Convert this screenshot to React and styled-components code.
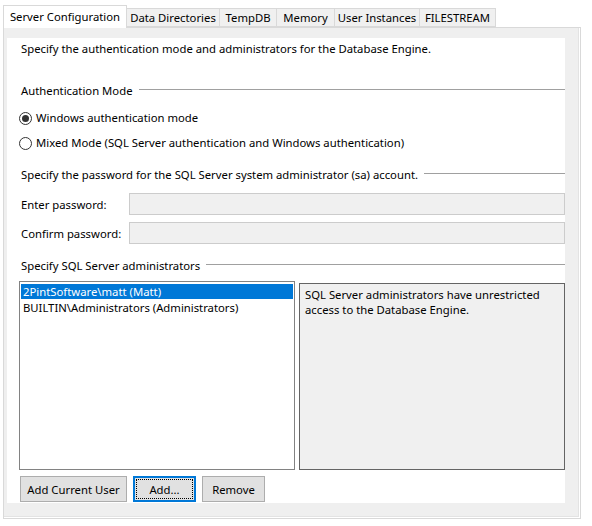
import React from "react";
import styled, { createGlobalStyle } from "styled-components";

const Global = createGlobalStyle`
  html, body {
    margin: 0;
    padding: 0;
    background: #fff;
  }
  body {
    font-family: "Noto Sans", "Open Sans", sans-serif;
    font-size: 11.3px;
    color: #000;
  }
`;

const Window = styled.div`
  width: 592px;
  height: 526px;
  padding: 5px 0 0 3px;
  box-sizing: border-box;
`;

const TabStrip = styled.div`
  display: flex;
  align-items: flex-end;
  height: 22px;
  position: relative;
  z-index: 1;
`;

const Tab = styled.div`
  width: ${(p) => p.$w}px;
  height: ${(p) => (p.$active ? 23 : 19)}px;
  box-sizing: border-box;
  display: flex;
  align-items: center;
  justify-content: center;
  background: ${(p) => (p.$active ? "#fff" : "#f0f0f0")};
  border: 1px solid #d9d9d9;
  border-bottom: ${(p) => (p.$active ? "none" : "1px solid #d9d9d9")};
  margin-left: ${(p) => (p.$active ? 0 : -1)}px;
  margin-bottom: ${(p) => (p.$active ? -1 : 0)}px;
  white-space: nowrap;
  padding-bottom: ${(p) => (p.$active ? 2 : 0)}px;
`;

const Panel = styled.div`
  width: 578px;
  height: 492px;
  box-sizing: border-box;
  border: 1px solid #d9d9d9;
  background: #fff;
  padding: 0 1px 1px 0;
`;

const Frame = styled.div`
  height: 100%;
  box-sizing: border-box;
  background: #efefef;
  border-right: 1px solid #e3e3e3;
  border-bottom: 1px solid #e3e3e3;
  padding: 10px 13px 13px 3px;
`;

const Content = styled.div`
  height: 100%;
  box-sizing: border-box;
  background: #fff;
  padding: 3px 0 0 12px;
  display: flex;
  flex-direction: column;
`;

const Text = styled.div`
  line-height: 16px;
  margin-left: 2px;
  white-space: nowrap;
`;

const Header = styled.div`
  display: flex;
  align-items: center;
  gap: 6px;
  line-height: 16px;
  margin-top: ${(p) => p.$mt}px;
  margin-left: 2px;
  white-space: nowrap;
  &::after {
    content: "";
    flex: 1;
    height: 1px;
    background: #a0a0a0;
    margin-top: -3px;
  }
`;

const RadioRow = styled.div`
  display: flex;
  align-items: center;
  gap: 4px;
  line-height: 16px;
  margin-top: ${(p) => p.$mt}px;
  white-space: nowrap;
`;

const RadioCircle = styled.span`
  width: 13px;
  height: 13px;
  box-sizing: border-box;
  border: 1px solid #333;
  border-radius: 50%;
  background: #fff;
  display: flex;
  align-items: center;
  justify-content: center;
  &::after {
    content: "";
    width: 7px;
    height: 7px;
    border-radius: 50%;
    background: ${(p) => (p.$checked ? "#333" : "transparent")};
  }
`;

const FieldRow = styled.div`
  display: flex;
  align-items: center;
  height: 22px;
  margin-top: ${(p) => p.$mt}px;
  margin-left: 2px;
`;

const FieldLabel = styled.div`
  width: 108px;
  white-space: nowrap;
`;

const Input = styled.div`
  width: 436px;
  height: 22px;
  box-sizing: border-box;
  border: 1px solid #cccccc;
  background: #f0f0f0;
`;

const Lists = styled.div`
  display: flex;
  gap: 4px;
  margin-top: 7px;
  height: 189px;
`;

const ListBox = styled.div`
  width: 276px;
  box-sizing: border-box;
  border: 1px solid #828282;
  background: #fff;
  padding: 2px 1px;
`;

const ListItem = styled.div`
  height: 15px;
  line-height: 15px;
  padding-left: 2px;
  white-space: nowrap;
  background: ${(p) => (p.$selected ? "#0078d7" : "transparent")};
  color: ${(p) => (p.$selected ? "#fff" : "#000")};
  margin-bottom: 1px;
`;

const InfoBox = styled.div`
  width: 266px;
  margin-top: 2px;
  box-sizing: border-box;
  border: 1px solid #646464;
  background: #f0f0f0;
  padding: 3px 5px;
  line-height: 15px;
`;

const Buttons = styled.div`
  display: flex;
  gap: 6px;
  margin-top: 6px;
  margin-left: 1px;
`;

const Button = styled.div`
  width: ${(p) => p.$w}px;
  height: 26px;
  box-sizing: border-box;
  display: flex;
  align-items: center;
  justify-content: center;
  background: #e1e1e1;
  border: ${(p) => (p.$focused ? "2px solid #0078d7" : "1px solid #adadad")};
  position: relative;
  white-space: nowrap;
  &::before {
    content: "";
    display: ${(p) => (p.$focused ? "block" : "none")};
    position: absolute;
    inset: 1px;
    border: 1px dotted #000;
  }
`;

const tabs = [
  { label: "Server Configuration", w: 124, active: true },
  { label: "Data Directories", w: 94 },
  { label: "TempDB", w: 58 },
  { label: "Memory", w: 59 },
  { label: "User Instances", w: 86 },
  { label: "FILESTREAM", w: 77 },
];

export default function App() {
  return (
    <Window>
      <Global />
      <TabStrip>
        {tabs.map((t) => (
          <Tab key={t.label} $w={t.w} $active={t.active}>
            {t.label}
          </Tab>
        ))}
      </TabStrip>
      <Panel>
        <Frame>
          <Content>
            <Text>
              Specify the authentication mode and administrators for the Database Engine.
            </Text>
            <Header $mt={26}>Authentication Mode</Header>
            <RadioRow $mt={11}>
              <RadioCircle $checked />
              Windows authentication mode
            </RadioRow>
            <RadioRow $mt={9}>
              <RadioCircle />
              Mixed Mode (SQL Server authentication and Windows authentication)
            </RadioRow>
            <Header $mt={16}>
              Specify the password for the SQL Server system administrator (sa) account.
            </Header>
            <FieldRow $mt={10}>
              <FieldLabel>Enter password:</FieldLabel>
              <Input />
            </FieldRow>
            <FieldRow $mt={7}>
              <FieldLabel>Confirm password:</FieldLabel>
              <Input />
            </FieldRow>
            <Header $mt={14}>Specify SQL Server administrators</Header>
            <Lists>
              <ListBox>
                <ListItem $selected>2PintSoftware\matt (Matt)</ListItem>
                <ListItem>BUILTIN\Administrators (Administrators)</ListItem>
              </ListBox>
              <InfoBox>
                SQL Server administrators have unrestricted
                <br />
                access to the Database Engine.
              </InfoBox>
            </Lists>
            <Buttons>
              <Button $w={107}>Add Current User</Button>
              <Button $w={63} $focused>Add...</Button>
              <Button $w={63}>Remove</Button>
            </Buttons>
          </Content>
        </Frame>
      </Panel>
    </Window>
  );
}
